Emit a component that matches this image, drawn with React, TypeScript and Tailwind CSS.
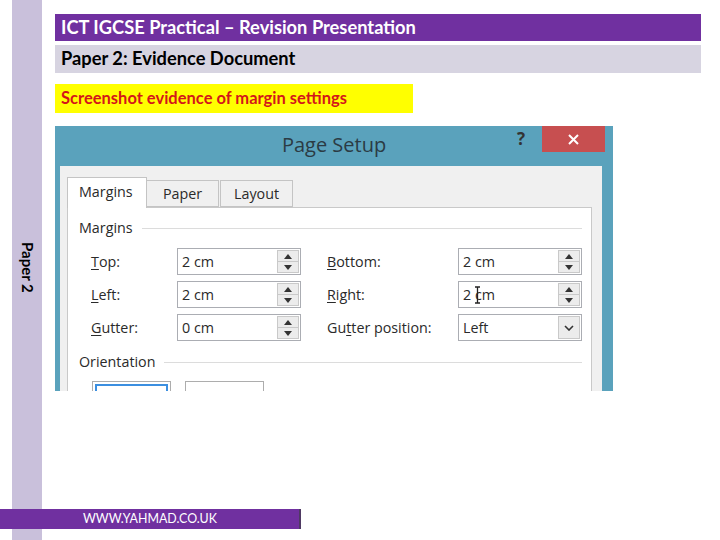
import React from "react";

const Spinner = () => (
  <div className="w-[22px] h-full flex flex-col border border-[#c9c9c9] bg-[#ececec]">
    <div className="flex-1 flex items-center justify-center border-b border-[#c9c9c9]">
      <svg width="8" height="5" viewBox="0 0 8 5"><path d="M0 5 L4 0 L8 5 Z" fill="#333" /></svg>
    </div>
    <div className="flex-1 flex items-center justify-center">
      <svg width="8" height="5" viewBox="0 0 8 5"><path d="M0 0 L4 5 L8 0 Z" fill="#333" /></svg>
    </div>
  </div>
);

const SpinInput = ({ value, cursor }: { value: string; cursor?: boolean }) => (
  <div className="w-[124px] h-[27px] border border-[#abadb3] bg-white flex items-stretch p-[1px]">
    <div className="flex-1 flex items-center pl-[3px] relative">
      <span>{value}</span>
      {cursor && (
        <svg className="absolute left-[14px] top-[3px]" width="7" height="18" viewBox="0 0 7 18">
          <path d="M1 1 H3.5 V17 H1 M6 1 H3.5 M6 17 H3.5" stroke="#222" strokeWidth="1.3" fill="none" />
        </svg>
      )}
    </div>
    <Spinner />
  </div>
);

const SelectInput = ({ value }: { value: string }) => (
  <div className="w-[124px] h-[27px] border border-[#abadb3] bg-white flex items-stretch p-[1px]">
    <div className="flex-1 flex items-center pl-[3px]">{value}</div>
    <div className="w-[22px] h-full flex items-center justify-center border border-[#c9c9c9] bg-[#ececec]">
      <svg width="10" height="6" viewBox="0 0 10 6"><path d="M1 1 L5 5 L9 1" stroke="#333" strokeWidth="1.6" fill="none" /></svg>
    </div>
  </div>
);

const Row = ({
  l1,
  u1,
  r1,
  v1,
  l2,
  v2,
  select,
  cursor,
}: {
  l1: string;
  u1: number;
  r1?: boolean;
  v1: string;
  l2: string;
  v2: string;
  select?: boolean;
  cursor?: boolean;
}) => {
  const lab = (t: string, i: number) => (
    <span>
      {t.slice(0, i)}
      <span className="underline underline-offset-2">{t.charAt(i)}</span>
      {t.slice(i + 1)}
    </span>
  );
  return (
    <div className="flex items-center h-[27px]">
      <div className="w-[86px]">{lab(l1, u1)}</div>
      <SpinInput value={v1} />
      <div className="w-[26px]" />
      <div className="w-[131px]">{lab(l2, r1 ? 2 : 0)}</div>
      {select ? <SelectInput value={v2} /> : <SpinInput value={v2} cursor={cursor} />}
    </div>
  );
};

export default function App() {
  return (
    <div
      className="w-[720px] h-[540px] bg-white relative flex overflow-hidden"
      style={{ fontFamily: "Lato, 'Liberation Sans', sans-serif" }}
    >
      <div className="ml-[12px] w-[30px] h-full bg-[#c9c0db] flex justify-center pt-[242px]">
        <span className="[writing-mode:vertical-rl] font-bold text-[15px] leading-none text-black h-fit">
          Paper 2
        </span>
      </div>

      <div className="ml-[13px] w-[646px] pt-[14px] flex flex-col items-start">
        <div className="w-full h-[27px] bg-[#7030a0] text-white font-bold text-[18.3px] px-[6px] flex items-center">
          ICT IGCSE Practical – Revision Presentation
        </div>
        <div className="mt-[4px] w-full h-[28px] bg-[#d7d4e1] text-black font-bold text-[18.3px] px-[6px] flex items-center">
          Paper 2: Evidence Document
        </div>
        <div className="mt-[11px] w-[358px] h-[29px] bg-[#ffff00] text-[#d4161a] font-bold text-[16.5px] px-[6px] flex items-center">
          Screenshot evidence of margin settings
        </div>

        <div
          className="mt-[13px] w-[558px] h-[265px] overflow-hidden bg-[#5aa2bc] flex flex-col text-[14.3px] text-[#2a2a2a]"
          style={{ fontFamily: "'Open Sans', 'Noto Sans', sans-serif" }}
        >
          <div className="h-[40px] flex shrink-0">
            <div className="flex-1" />
            <div className="pt-[4px] text-[20px] text-[#2b3b44] leading-[30px]">Page Setup</div>
            <div className="flex-1 flex justify-end items-start">
              <div className="mt-[1px] mr-[17px] text-[17px] font-bold text-[#333] leading-[24px]">?</div>
              <div className="mr-[8px] w-[63px] h-[26px] bg-[#c74f50] flex items-center justify-center">
                <svg width="11" height="11" viewBox="0 0 11 11">
                  <path d="M1 1 L10 10 M10 1 L1 10" stroke="#fff" strokeWidth="2" />
                </svg>
              </div>
            </div>
          </div>

          <div className="flex-1 ml-[5px] mr-[11px] bg-[#f0f0f0] pl-[7px] pr-[10px] pt-[11px] flex flex-col">
            <div className="h-[30px] flex items-end shrink-0">
              <div className="w-[80px] h-[31px] bg-white border border-b-0 border-[#c4c4c4] pl-[11px] pt-[3px] relative z-10 -mb-px">
                Margins
              </div>
              <div className="w-[72px] h-[27px] bg-[#f0f0f0] border border-l-0 border-[#c4c4c4] flex items-center justify-center">
                Paper
              </div>
              <div className="ml-[1px] w-[73px] h-[27px] bg-[#f0f0f0] border border-[#c4c4c4] flex items-center justify-center">
                Layout
              </div>
            </div>
            <div className="flex-1 bg-white border border-[#c9c9c9] flex flex-col pt-[10px]">
              <div className="flex items-center h-[20px] pl-[11px] pr-[9px]">
                <span>Margins</span>
                <div className="flex-1 h-px bg-[#dcdcdc] ml-[9px]" />
              </div>
              <div className="mt-[10px] pl-[23px] flex flex-col gap-[6px]">
                <Row l1="Top:" u1={0} v1="2 cm" l2="Bottom:" v2="2 cm" />
                <Row l1="Left:" u1={0} v1="2 cm" l2="Right:" v2="2 cm" cursor />
                <Row l1="Gutter:" u1={0} v1="0 cm" l2="Gutter position:" r1 v2="Left" select />
              </div>
              <div className="mt-[11px] flex items-center h-[20px] pl-[11px] pr-[9px]">
                <span>Orientation</span>
                <div className="flex-1 h-px bg-[#dcdcdc] ml-[9px]" />
              </div>
              <div className="mt-[9px] pl-[24px] flex gap-[14px]">
                <div className="w-[79px] h-[40px] border border-[#adadad] p-[2px]">
                  <div className="w-full h-full border-2 border-[#3c8fe0]" />
                </div>
                <div className="w-[79px] h-[40px] border border-[#adadad]" />
              </div>
            </div>
          </div>
        </div>
      </div>

      <div className="absolute left-0 top-[509px] w-[301px] h-[20px] bg-[#7030a0] border-r-2 border-[#4f3a63] flex items-center pl-[83px] text-white text-[12.4px]">
        WWW.YAHMAD.CO.UK
      </div>
    </div>
  );
}
